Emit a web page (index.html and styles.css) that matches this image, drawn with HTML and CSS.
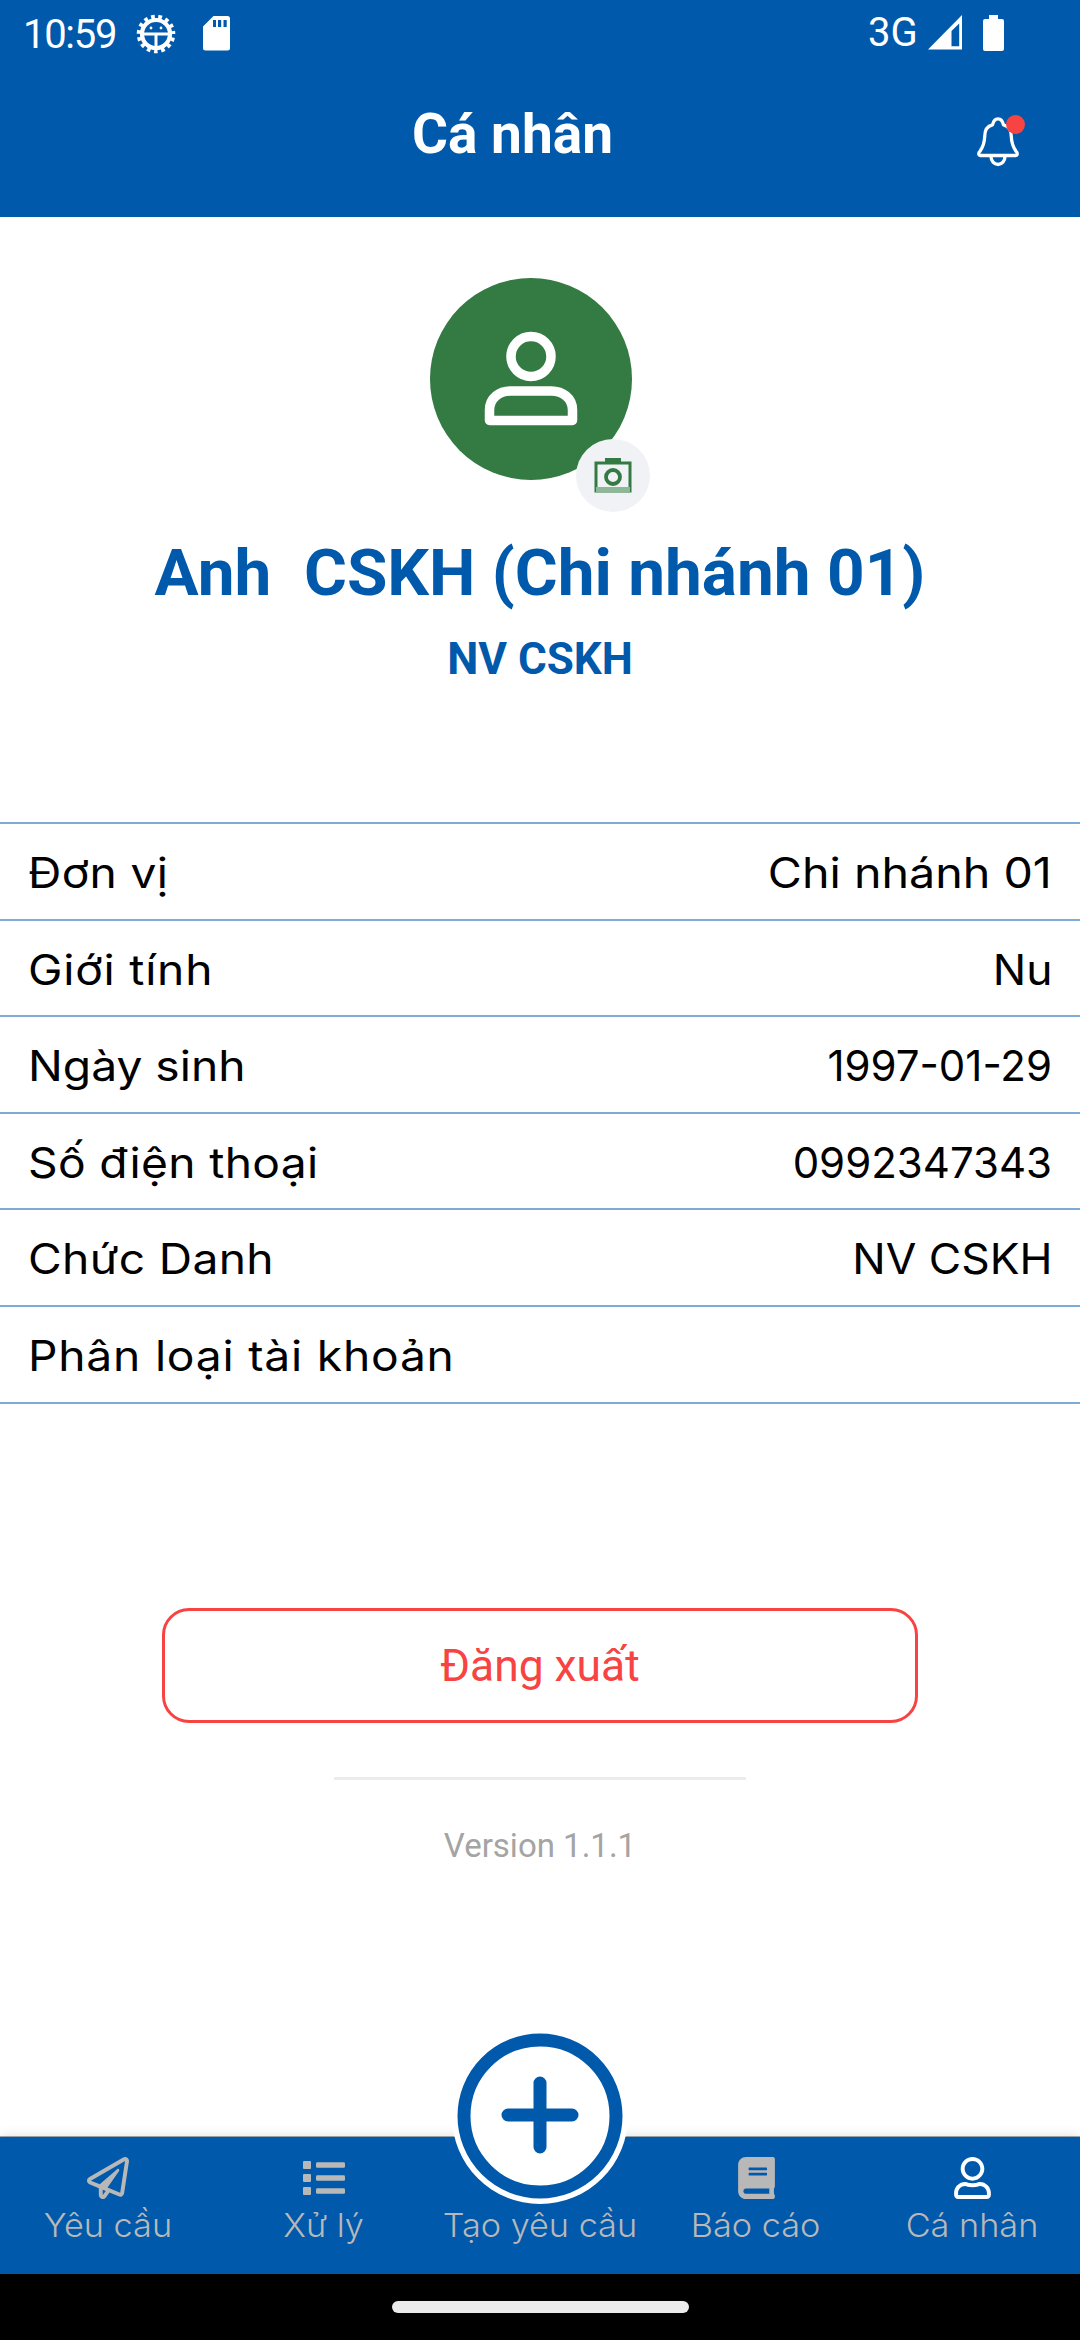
FILE: index.html
```html
<!DOCTYPE html>
<html lang="vi">
<head>
    <meta charset="UTF-8">
    <meta name="viewport" content="width=device-width, initial-scale=1.0">
    <title>Cá nhân</title>
    <link rel="stylesheet" href="styles.css">
</head>
<body>
    <div class="screen">
        <header class="header">
            <div class="status-bar">
                <span class="clock">10:59</span>
                <svg class="icon-debug" width="40" height="40" viewBox="0 0 40 40" fill="none" stroke="#fff">
                    <circle cx="20" cy="20" r="14" stroke-width="4.2"/>
                    <circle cx="20" cy="20" r="17" stroke-width="4.600" stroke-dasharray="3.600 3.521" stroke-dashoffset="-24.900"/>
                    <path d="M7 20h26M20 20v16" stroke-width="3"/>
                    <circle cx="15" cy="14" r="1.4" fill="#fff" stroke="none"/>
                    <circle cx="25" cy="14" r="1.4" fill="#fff" stroke="none"/>
                </svg>
                <svg class="icon-sd" width="28" height="36" viewBox="0 0 28 36">
                    <path fill="#fff" fill-rule="evenodd" d="M10.500 0H24.500a2.500 2.500 0 0 1 2.500 2.500V32a2.500 2.500 0 0 1-2.500 2.500H2.500A2.500 2.500 0 0 1 0 32V10.500zM10 4v7h3V4zM15 4v7h3.200V4zM20.500 4v7h3.200V4z"/>
                </svg>
                <span class="network">3G</span>
                <svg class="icon-signal" width="35" height="35" viewBox="0 0 35 35">
                    <path fill="#fff" fill-rule="evenodd" d="M34 0v34.500H0zM31.200 8.500L23.500 16v15.200h7.700z"/>
                </svg>
                <svg class="icon-battery" width="21" height="36" viewBox="0 0 21 36">
                    <path fill="#fff" d="M6 0h9v4h4a2 2 0 0 1 2 2v28a2 2 0 0 1-2 2H2a2 2 0 0 1-2-2V6a2 2 0 0 1 2-2h4z"/>
                </svg>
            </div>
            <div class="title-bar">
                <h1 class="title">Cá nhân</h1>
                <div class="bell">
                    <svg width="42" height="50" viewBox="0 0 42 50" fill="none" stroke="#fff" stroke-width="3.300" stroke-linejoin="round">
                        <path d="M3.500 38.500H38.500C41 38.200 40.500 35.500 39 34.200C36 30 34.500 25 34.300 19.500C34.300 12.500 31 8.800 26.500 7.800C25.500 3.300 23.500 1.800 21 1.800S16.500 3.300 15.500 7.800C11 8.800 7.700 12.500 7.700 19.500C7.500 25 6 30 3 34.200C1.500 35.500 1 38.200 3.500 38.500z"/>
                        <path d="M14 39.500a7 8 0 0 0 14 0"/>
                    </svg>
                    <span class="bell-dot"></span>
                </div>
            </div>
        </header>

        <main class="content">
            <div class="avatar">
                <svg width="202" height="202" viewBox="0 0 202 202">
                    <circle cx="101" cy="101" r="101" fill="#347a43"/>
                    <g fill="none" stroke="#fff" stroke-width="9.500" stroke-linejoin="round">
                        <circle cx="101" cy="78.500" r="20"/>
                        <path d="M59.500 142.500V132c0-12 10-19 21-19h41c11 0 21 7 21 19v10.500z"/>
                    </g>
                </svg>
                <span class="camera">
                    <svg width="38" height="36" viewBox="0 0 38 36" fill="none" stroke="#347a43">
                        <path d="M11 0h16v4H11z" fill="#347a43" stroke="none"/>
                        <rect x="2" y="5" width="34" height="28" stroke-width="3"/>
                        <path d="M2 31.500h34" stroke-width="5" stroke="#8db897"/>
                        <circle cx="19" cy="19" r="7" stroke-width="3.800"/>
                    </svg>
                </span>
            </div>
            <h2 class="name">Anh&nbsp; CSKH (Chi nhánh 01)</h2>
            <p class="role">NV CSKH</p>

            <ul class="info">
                <li><span class="label">Đơn vị</span><span class="value">Chi nhánh 01</span></li>
                <li><span class="label loose">Giới tính</span><span class="value caps">Nu</span></li>
                <li><span class="label tight">Ngày sinh</span><span class="value number">1997-01-29</span></li>
                <li><span class="label">Số điện thoại</span><span class="value number">0992347343</span></li>
                <li><span class="label">Chức Danh</span><span class="value caps">NV CSKH</span></li>
                <li><span class="label loose">Phân loại tài khoản</span></li>
            </ul>

            <button class="logout-btn" type="button">Đăng xuất</button>
            <hr class="divider">
            <p class="version">Version 1.1.1</p>
        </main>

        <nav class="tabs">
            <a class="tab">
                <svg width="42" height="42" viewBox="0 0 512 512"><path fill="currentColor" d="M440 6.500L24 246.400c-34.400 19.900-31.100 70.800 5.700 85.900L144 379.600V464c0 46.400 59.200 65.500 86.600 28.600l43.800-59.100 111.900 46.200c5.900 2.400 12.100 3.600 18.300 3.600 8.200 0 16.300-2.100 23.600-6.200 12.800-7.200 21.600-20 23.900-34.500l59.400-387.200c6.100-40.100-36.900-68.800-71.500-48.900zM192 464v-64.600l36.600 15.100L192 464zm212.600-28.700l-153.800-63.500L391 169.500c10.700-15.500-9.500-33.500-23.700-21.200L155.800 332.600 48 288 464 48l-59.400 387.300z"/></svg>
                <span class="tab-label">Yêu cầu</span>
            </a>
            <a class="tab">
                <svg width="42" height="42" viewBox="0 0 42 42" fill="currentColor">
                    <rect x="0" y="4" width="8" height="8" rx="1"/><rect x="13" y="5.300" width="29" height="5.400" rx="1.300"/>
                    <rect x="0" y="17" width="8" height="8" rx="1"/><rect x="13" y="18.300" width="29" height="5.400" rx="1.300"/>
                    <rect x="0" y="30" width="8" height="8" rx="1"/><rect x="13" y="31.300" width="29" height="5.400" rx="1.300"/>
                </svg>
                <span class="tab-label">Xử lý</span>
            </a>
            <a class="tab tab-create">
                <span class="create-btn">
                    <svg width="166" height="166" viewBox="0 0 166 166" fill="none" stroke="#0059aa" stroke-width="13">
                        <circle cx="83" cy="83" r="76"/>
                        <path d="M51 82h64M83 50v64" stroke-linecap="round"/>
                    </svg>
                </span>
                <span class="tab-label">Tạo yêu cầu</span>
            </a>
            <a class="tab">
                <svg width="37" height="42" viewBox="0 0 448 512"><path fill="currentColor" d="M448 360V24c0-13.300-10.700-24-24-24H96C43 0 0 43 0 96v320c0 53 43 96 96 96h328c13.300 0 24-10.700 24-24v-16c0-7.500-3.500-14.300-8.900-18.700-4.200-15.400-4.200-59.300 0-74.700 5.400-4.300 8.900-11.100 8.900-18.600zM128 134c0-3.300 2.700-6 6-6h212c3.300 0 6 2.700 6 6v20c0 3.300-2.700 6-6 6H134c-3.300 0-6-2.700-6-6v-20zm0 64c0-3.300 2.700-6 6-6h212c3.300 0 6 2.700 6 6v20c0 3.300-2.700 6-6 6H134c-3.300 0-6-2.700-6-6v-20zm253.400 250H96c-17.700 0-32-14.300-32-32 0-17.600 14.400-32 32-32h285.400c-1.900 17.100-1.900 46.900 0 64z"/></svg>
                <span class="tab-label">Báo cáo</span>
            </a>
            <a class="tab">
                <svg class="active" width="37" height="42" viewBox="0 0 448 512"><path fill="currentColor" d="M313.600 304c-28.700 0-42.500 16-89.600 16-47.100 0-60.800-16-89.600-16C60.200 304 0 364.200 0 438.400V464c0 26.500 21.500 48 48 48h352c26.500 0 48-21.500 48-48v-25.600c0-74.200-60.200-134.400-134.400-134.400zM400 464H48v-25.600c0-47.600 38.800-86.400 86.400-86.400 14.600 0 38.300 16 89.600 16 51.700 0 74.900-16 89.600-16 47.600 0 86.400 38.800 86.400 86.400V464zM224 288c79.500 0 144-64.500 144-144S303.500 0 224 0 80 64.500 80 144s64.500 144 144 144zm0-240c52.900 0 96 43.100 96 96s-43.100 96-96 96-96-43.100-96-96 43.100-96 96-96z"/></svg>
                <span class="tab-label">Cá nhân</span>
            </a>
        </nav>
        <div class="home-area"><span class="home-bar"></span></div>
    </div>
</body>
</html>
```

FILE: styles.css
```css
* {
    box-sizing: border-box;
}
body {
    margin: 0;
    background-color: #fff;
    font-family: Roboto, sans-serif;
}
h1, h2, p, ul {
    margin: 0;
    padding: 0;
}
.screen {
    display: flex;
    flex-direction: column;
    width: 1080px;
    height: 2340px;
}
.header {
    height: 217px;
    background-color: #0059aa;
    color: #fff;
}
.status-bar {
    display: flex;
    align-items: flex-start;
    height: 67px;
    padding: 14px 76px 0 23px;
}
.clock {
    width: 113px;
    font-size: 40px;
    line-height: 41px;
    letter-spacing: -1.3px;
}
.icon-sd {
    margin: 2px 0 0 27px;
}
.network {
    margin-left: auto;
    width: 60px;
    font-size: 40px;
    line-height: 37px;
}
.icon-signal {
    margin: 1px 20px 0 0;
}
.icon-battery {
    margin-top: 1px;
}
.title-bar {
    display: flex;
    align-items: flex-start;
    justify-content: space-between;
    padding: 0 55px 0 412px;
}
.title {
    font-size: 55px;
    line-height: 66px;
    margin-top: 34px;
    font-weight: 700;
}
.bell {
    position: relative;
    width: 48px;
    height: 50px;
    margin-top: 50px;
}
.bell-dot {
    position: absolute;
    right: 0;
    top: -2px;
    width: 19px;
    height: 19px;
    border-radius: 50%;
    background-color: #f74341;
}
.content {
    display: flex;
    flex-direction: column;
    align-items: center;
    flex: 1;
}
.avatar {
    position: relative;
    width: 202px;
    height: 202px;
    margin: 61px 18px 0 0;
}
.camera {
    position: absolute;
    left: 146px;
    top: 161px;
    width: 74px;
    height: 73px;
    border-radius: 50%;
    background-color: #f0f2f5;
    display: flex;
    align-items: center;
    justify-content: center;
}
.name {
    margin-top: 53px;
    font-size: 65.7px;
    line-height: 80px;
    color: #0059aa;
    white-space: nowrap;
}
.role {
    margin-top: 20px;
    font-size: 44px;
    line-height: 52px;
    font-weight: 700;
    color: #0059aa;
}
.info {
    width: 100%;
    margin-top: 137px;
    list-style: none;
    border-bottom: 2px solid #7facd6;
    font-family: Inter, sans-serif;
    font-size: 42px;
    color: #000;
}
.info li {
    display: flex;
    justify-content: space-between;
    height: 96.6px;
    padding: 0 28px;
    border-top: 2px solid #7facd6;
    line-height: 97px;
}
.label {
    transform: scaleX(1.1);
    transform-origin: left;
    letter-spacing: 0.3px;
}
.label.loose {
    letter-spacing: 0.7px;
}
.label.tight {
    letter-spacing: 0;
}
.value {
    transform: scaleX(1.11);
    transform-origin: right;
}
.value.caps {
    transform: scaleX(1.057);
}
.value.number {
    transform: none;
}
.logout-btn {
    width: 756px;
    height: 115px;
    margin-top: 204px;
    padding: 2px 0 0;
    border: 3px solid #f74341;
    border-radius: 27px;
    background-color: #fff;
    color: #f74341;
    font-family: Roboto, sans-serif;
    font-size: 44.4px;
}
.divider {
    width: 412px;
    height: 3px;
    margin: 54px 0 0;
    border: none;
    background-color: #ebebf0;
}
.version {
    margin-top: 46px;
    font-size: 33px;
    line-height: 40px;
    color: #a4a4a4;
}
.tabs {
    display: flex;
    height: 137px;
    background-color: #0059aa;
    box-shadow: 0 0 12px rgba(0, 0, 0, 0.15), 0 -1px 0 #a3adb5;
    color: #b8b8b8;
}
.tab {
    display: flex;
    flex-direction: column;
    align-items: center;
    flex: 1;
    padding-top: 20px;
}
.tab-label {
    margin-top: 7px;
    font-family: Inter, sans-serif;
    font-size: 32px;
    line-height: 40px;
    font-weight: 300;
    white-space: nowrap;
    transform: scaleX(1.07);
}
.active {
    color: #fff;
}
.tab-create {
    position: relative;
    padding-top: 62px;
}
.create-btn {
    position: absolute;
    top: -109px;
    left: 20px;
    width: 176px;
    height: 176px;
    padding: 5px;
    border-radius: 50%;
    background-color: #fff;
}
.create-btn svg {
    display: block;
}
.home-area {
    display: flex;
    justify-content: center;
    height: 66px;
    padding-top: 27px;
    background-color: #000;
}
.home-bar {
    width: 297px;
    height: 12px;
    border-radius: 6px;
    background-color: #ebebeb;
}
```
